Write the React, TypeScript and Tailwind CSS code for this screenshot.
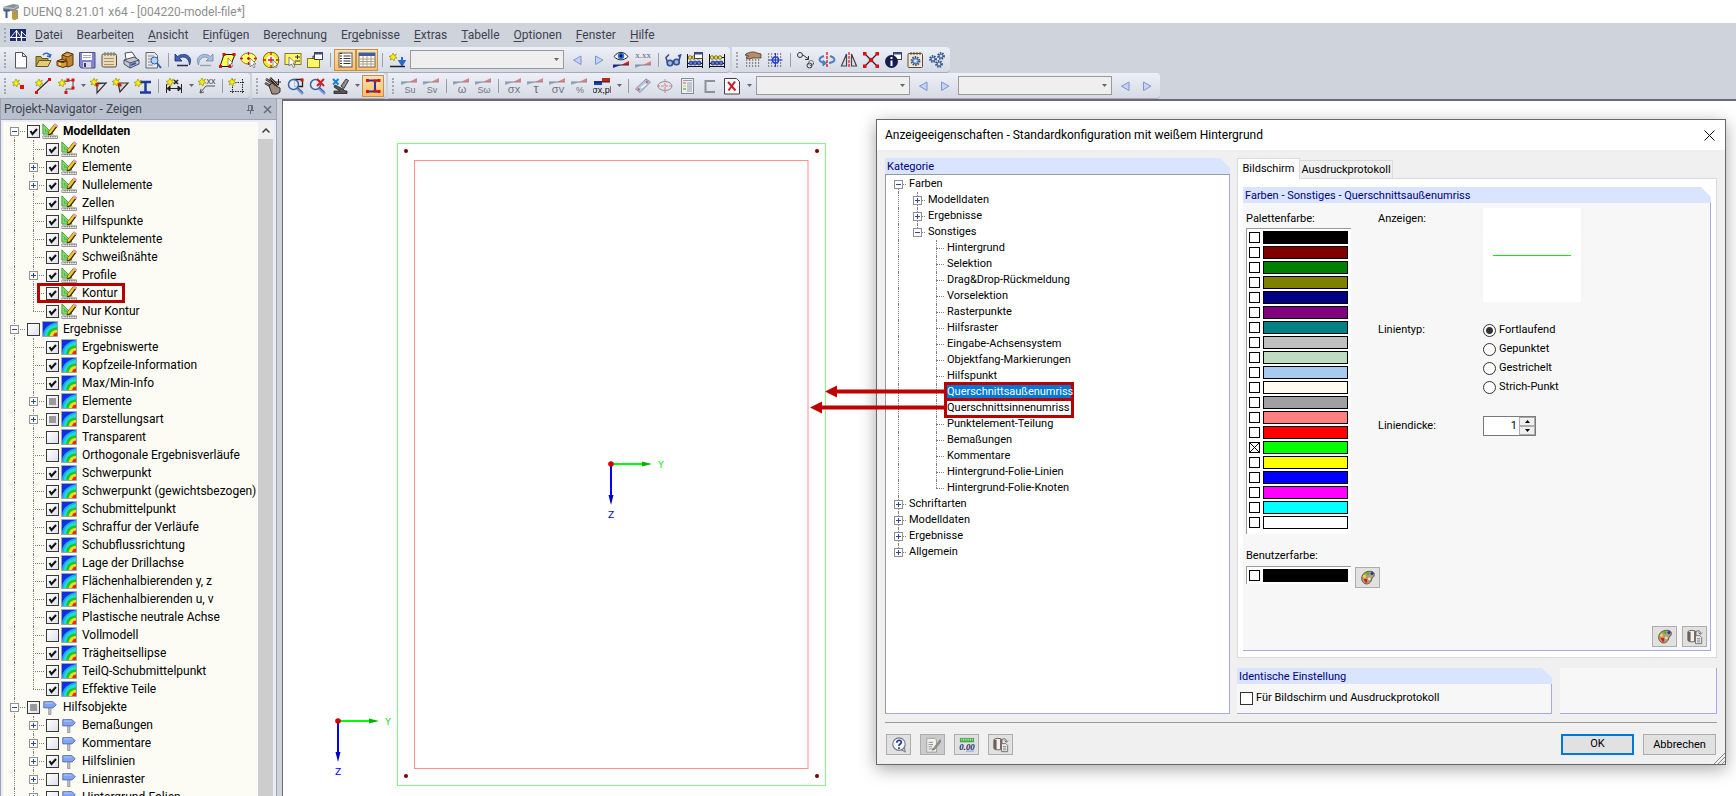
import type { ReactNode } from "react";

type Check = "on" | "off" | "mixed";
type NavItem = { label: string; check: Check; expand?: boolean; marked?: boolean };
type NavGroup = { label: string; check: Check; icon: "model" | "result" | "sign"; bold?: boolean; items: NavItem[] };

const menus = [
  ["", "D", "atei"],
  ["Bearbeite", "n", ""],
  ["", "A", "nsicht"],
  ["E", "i", "nfügen"],
  ["Be", "r", "echnung"],
  ["Er", "g", "ebnisse"],
  ["", "E", "xtras"],
  ["", "T", "abelle"],
  ["", "O", "ptionen"],
  ["", "F", "enster"],
  ["", "H", "ilfe"],
];

const navigator: NavGroup[] = [
  {
    label: "Modelldaten",
    check: "on",
    icon: "model",
    bold: true,
    items: [
      { label: "Knoten", check: "on" },
      { label: "Elemente", check: "on", expand: true },
      { label: "Nullelemente", check: "on", expand: true },
      { label: "Zellen", check: "on" },
      { label: "Hilfspunkte", check: "on" },
      { label: "Punktelemente", check: "on" },
      { label: "Schweißnähte", check: "on" },
      { label: "Profile", check: "on", expand: true },
      { label: "Kontur", check: "on", marked: true },
      { label: "Nur Kontur", check: "on" },
    ],
  },
  {
    label: "Ergebnisse",
    check: "off",
    icon: "result",
    items: [
      { label: "Ergebniswerte", check: "on" },
      { label: "Kopfzeile-Information", check: "on" },
      { label: "Max/Min-Info", check: "on" },
      { label: "Elemente", check: "mixed", expand: true },
      { label: "Darstellungsart", check: "mixed", expand: true },
      { label: "Transparent", check: "off" },
      { label: "Orthogonale Ergebnisverläufe", check: "off" },
      { label: "Schwerpunkt", check: "on" },
      { label: "Schwerpunkt (gewichtsbezogen)", check: "on" },
      { label: "Schubmittelpunkt", check: "on" },
      { label: "Schraffur der Verläufe", check: "on" },
      { label: "Schubflussrichtung", check: "on" },
      { label: "Lage der Drillachse", check: "on" },
      { label: "Flächenhalbierenden y, z", check: "on" },
      { label: "Flächenhalbierenden u, v", check: "on" },
      { label: "Plastische neutrale Achse", check: "on" },
      { label: "Vollmodell", check: "off" },
      { label: "Trägheitsellipse", check: "on" },
      { label: "TeilQ-Schubmittelpunkt", check: "on" },
      { label: "Effektive Teile", check: "on" },
    ],
  },
  {
    label: "Hilfsobjekte",
    check: "mixed",
    icon: "sign",
    items: [
      { label: "Bemaßungen", check: "off", expand: true },
      { label: "Kommentare", check: "off", expand: true },
      { label: "Hilfslinien", check: "on", expand: true },
      { label: "Linienraster", check: "off", expand: true },
      { label: "Hintergrund-Folien", check: "off", expand: true },
    ],
  },
];

const categories = [
  "Hintergrund",
  "Selektion",
  "Drag&Drop-Rückmeldung",
  "Vorselektion",
  "Rasterpunkte",
  "Hilfsraster",
  "Eingabe-Achsensystem",
  "Objektfang-Markierungen",
  "Hilfspunkt",
  "Querschnittsaußenumriss",
  "Querschnittsinnenumriss",
  "Punktelement-Teilung",
  "Bemaßungen",
  "Kommentare",
  "Hintergrund-Folie-Linien",
  "Hintergrund-Folie-Knoten",
];

const palette = [
  { name: "Schwarz", bg: "bg-[#000000]" },
  { name: "Dunkelrot", bg: "bg-[#800000]" },
  { name: "Grün", bg: "bg-[#008000]" },
  { name: "Oliv", bg: "bg-[#808000]" },
  { name: "Dunkelblau", bg: "bg-[#000080]" },
  { name: "Violett", bg: "bg-[#800080]" },
  { name: "Blaugrün", bg: "bg-[#008080]" },
  { name: "Silber", bg: "bg-[#c0c0c0]" },
  { name: "Hellgrün", bg: "bg-[#c0dcc0]" },
  { name: "Himmelblau", bg: "bg-[#a6caf0]" },
  { name: "Creme", bg: "bg-[#fffbf0]" },
  { name: "Grau", bg: "bg-[#a0a0a4]" },
  { name: "Hellrot", bg: "bg-[#ff8080]" },
  { name: "Rot", bg: "bg-[#ff0000]" },
  { name: "Limone", bg: "bg-[#00ff00]" },
  { name: "Gelb", bg: "bg-[#ffff00]" },
  { name: "Blau", bg: "bg-[#0000ff]" },
  { name: "Magenta", bg: "bg-[#ff00ff]" },
  { name: "Cyan", bg: "bg-[#00ffff]" },
  { name: "Weiß", bg: "bg-[#ffffff]" },
];

/* ---------- icons, all on an 18 x 18 grid ---------- */

function Star({ x = 5, y = 5 }: { x?: number; y?: number }) {
  return (
    <g transform={`translate(${x} ${y})`}>
      <path d="M0-4 1-1.5 3.5-3 2-.5 4 1 1.5 1.2 1 4-.7 1.8-3 3-1.8.6-4-.6-1.4-1.2z" fill="#fff200" stroke="#8c8600" strokeWidth=".6" />
    </g>
  );
}

function Node({ x, y }: { x: number; y: number }) {
  return <rect x={x - 1.5} y={y - 1.5} width="3" height="3" fill="#e01010" />;
}

function Wedge({ faded = true }: { faded?: boolean }) {
  return (
    <g opacity={faded ? 0.5 : 1}>
      <path d="M1 6h8L1 9z" fill={faded ? "#4a68b8" : "#1226e0"} />
      <path d="M9 6l8-4v4z" fill="#e01818" />
      <path d="M1 6h16" stroke="#333" />
    </g>
  );
}

function WedgeText({ text, size = 9 }: { text: string; size?: number }) {
  return (
    <g>
      <g transform="translate(0 -1)">
        <Wedge />
      </g>
      <text x="10" y="16" textAnchor="middle" fontSize={size} fontFamily="Liberation Sans, sans-serif" fill="#70747f">
        {text}
      </text>
    </g>
  );
}

function Abacus() {
  return (
    <g>
      <path d="M1.5 3v14M16.5 3v14M1 6.500h16M1 12.500h16M1 15.500h16" stroke="#111" fill="none" />
      {[4, 8, 12].map((x) => (
        <circle key={x} cx={x} cy="6.500" r="1.800" fill="#f0dc50" stroke="#5a5000" strokeWidth=".7" />
      ))}
      {[5, 9, 13].map((x) => (
        <circle key={x} cx={x} cy="12" r="2" fill="#5878d8" stroke="#14246a" strokeWidth=".8" />
      ))}
    </g>
  );
}

function Magnifier() {
  return (
    <g>
      <path d="M11 11l5 5" stroke="#7c98d4" strokeWidth="3" strokeLinecap="round" />
      <path d="M12 11l4.500 4" stroke="#2c50a8" strokeWidth="1" strokeLinecap="round" />
      <circle cx="7.500" cy="7.500" r="5" fill="#e4f0ff" fillOpacity=".8" stroke="#3c5ca4" strokeWidth="1.500" />
    </g>
  );
}

function Lattice() {
  return <path d="M2 3h15M2 6h15M2 9h15M2 12h15M2 15h15" stroke="#333" strokeWidth="1.200" strokeDasharray="1.200 1.800" />;
}

function Cog({ x, y, r }: { x: number; y: number; r: number }) {
  return (
    <g transform={`translate(${x} ${y})`}>
      <circle r={r} fill="none" stroke="#34508c" strokeWidth="1.800" strokeDasharray="1.500 1" />
      <circle r={r - 1} fill="#84a8e4" stroke="#34508c" strokeWidth=".8" />
      <circle r={r / 3} fill="#e8edf6" />
    </g>
  );
}

const icons: Record<string, ReactNode> = {
  file: <path d="M3.500 1.500h7l4 4v11.500h-11zM10.500 1.500v4h4" fill="#fff" stroke="#555" />,
  open: (
    <g stroke="#6a5618">
      <path d="M2 15.500V5.500h5l1 2h6v3" fill="#b89c48" />
      <path d="M2 15.500l3-6h12l-3 6z" fill="#e0cc78" />
      <path d="M9 4c2-3 6-2 7 1m1-2l-1 3-3-1" fill="none" stroke="#2c6db8" strokeWidth="1.500" />
    </g>
  ),
  archive: (
    <g stroke="#5a3408">
      <path d="M6 4l5-3 6 2v11l-5 2-6-2z" fill="#c08430" />
      <path d="M6 4l6 2 5-3" fill="#e4b868" />
      <path d="M1 10l5-2 5 2v5l-4 1.500-6-2z" fill="#d89b3c" />
      <path d="M1 10l6 1.500 4-1.500M9 8h2" fill="#3c2408" />
      <path d="M3 13h2" stroke="#fff0b0" strokeWidth="1.500" />
    </g>
  ),
  save: (
    <g>
      <path d="M1.500 1.500h15.500v15.500h-14l-1.500-2z" fill="#8484cc" stroke="#50508c" />
      <path d="M4 2h10v7H4z" fill="#fff" />
      <path d="M5 4.500h8M5 6.500h8" stroke="#a8a8c8" />
      <path d="M5 11h8v5.500H5z" fill="#dadae8" />
      <path d="M6 12h2v4H6z" fill="#34346a" />
    </g>
  ),
  clip: (
    <g>
      <rect x="2" y="3" width="14.500" height="13" rx="1.500" fill="#ecdcb8" stroke="#5c4c34" />
      <path d="M5 1v4M8 1v4M11 1v4M14 1v4" stroke="#777" />
      <path d="M4 7.500h10M4 10.500h10M4 13.500h10" stroke="#a4947c" />
    </g>
  ),
  print: (
    <g stroke="#4c4c58">
      <path d="M4 8L3 2l7-1 4 6" fill="#fff" />
      <path d="M2 9l10-3 5 3v4l-9 4-6-4z" fill="#c4c8d4" />
      <path d="M2 9l6 3 9-3M8 12v5" fill="none" />
      <path d="M9 14l5-2" stroke="#2c58c8" strokeWidth="2" />
    </g>
  ),
  preview: (
    <g>
      <path d="M2 1.500h8.500l3 3v12.500H2z" fill="#e8eaf0" stroke="#666" />
      <path d="M4 5h6M4 8h4M4 11h3M4 14h5" stroke="#888" />
      <circle cx="10.500" cy="9.500" r="3.500" fill="#b4d4f8" stroke="#34609c" />
      <path d="M13 12l4 5" stroke="#34609c" strokeWidth="2" />
    </g>
  ),
  undo: (
    <g>
      <path d="M1 3v7h7L5.500 7.500C9 4.500 15 6 15.500 14 20 4 9 1 3.500 5.500z" fill="#3c64b8" stroke="#142c68" strokeWidth=".8" />
      <path d="M3 14.500h11" stroke="#20305c" strokeWidth="1.500" />
    </g>
  ),
  redo: (
    <g>
      <path d="M17 3v7h-7l2.500-2.500C9 4.500 3 6 2.500 14-2 4 9 1 14.500 5.500z" fill="#a8c0dc" stroke="#7088a8" strokeWidth=".8" />
      <path d="M4 14.500h11" stroke="#98a4b8" strokeWidth="1.500" />
    </g>
  ),
  areaPoly: (
    <g>
      <path d="M6 3.500h11l-5 12H2z" fill="#ffff50" stroke="#111" />
      <Node x={6} y={3.5} />
      <Node x={16} y={3.5} />
      <Node x={2.5} y={15.5} />
      <Node x={12} y={15.5} />
      <path d="M10 7v8l2-2 2 3 1-1-2-3h2z" fill="#fff" stroke="#555" strokeWidth=".6" />
    </g>
  ),
  areaEllipse: (
    <g>
      <ellipse cx="8.500" cy="7.500" rx="7.500" ry="5.500" fill="#ffff70" stroke="#8c7a00" />
      <path d="M8.500 1v3M8.500 11v3M0 7.500h3M14 7.500h3M7 7.500h3M8.500 6v3" stroke="#e01010" strokeWidth="1.300" />
      <path d="M10 7v9l2-2 2 3 1-1-2-3h3z" fill="#fff" stroke="#555" strokeWidth=".6" />
    </g>
  ),
  areaRing: (
    <g>
      <circle cx="9" cy="9" r="6" fill="none" stroke="#6a5c00" strokeWidth="4.500" />
      <circle cx="9" cy="9" r="6" fill="#fff" stroke="#f8ec20" strokeWidth="3" />
      <path d="M9 1v3M9 6v6M6 9h6M1 9h3M14 9h3M9 14v3" stroke="#e01010" strokeWidth="1.300" />
      <path d="M11 9v8l2-2 1 2 1-1-1-2h2z" fill="#fff" stroke="#555" strokeWidth=".6" />
    </g>
  ),
  note: (
    <g>
      <rect x="1" y="2.500" width="16" height="11" fill="#fff76a" stroke="#8a7c1c" />
      <path d="M5 6v9l2.500-2 2 3.500 1.500-1-2-3.500h3z" fill="#fff" stroke="#555" strokeWidth=".7" />
      <path d="M11 6h5M13.500 4v4M11 10h5" stroke="#333" />
    </g>
  ),
  noteWindow: (
    <g>
      <rect x="1.500" y="7.500" width="12" height="9" fill="#fff76a" stroke="#8a7c1c" />
      <path d="M7 8V5h3" fill="none" stroke="#333" />
      <rect x="8.500" y="1.500" width="8" height="7" fill="#fff" stroke="#444" />
      <path d="M8.500 2.500h8" stroke="#3c4c8c" strokeWidth="2" />
    </g>
  ),
  panelList: (
    <g>
      <rect x="3" y="2" width="13" height="14" fill="#fff" stroke="#555" />
      <path d="M5 2v14" stroke="#333" strokeDasharray="1 1.500" strokeWidth="2" />
      <path d="M7.500 5h7M7.500 7.500h7M7.500 10h7M7.500 12.500h7" stroke="#333" />
    </g>
  ),
  panelTable: (
    <g>
      <rect x="1" y="2" width="16" height="14" fill="#fff" stroke="#666" />
      <path d="M1 3.500h16" stroke="#3c5caa" strokeWidth="3" />
      <path d="M1 8h16M1 10.500h16M1 13h16M5 5v11M9 5v11M13 5v11" stroke="#b09c80" />
    </g>
  ),
  newLoad: (
    <g>
      <Star x={5} y={6} />
      <path d="M14 6v6M11.500 10l2.500 4 2.500-4z" fill="#2c68c8" stroke="#2c68c8" strokeWidth="2" />
      <path d="M2 15.500h15" stroke="#222" strokeWidth="1.500" />
    </g>
  ),
  left: <path d="M13 5v8.500L5.500 9.200z" fill="#c0d4fa" stroke="#8294c8" />,
  right: <path d="M5.500 5v8.500L13 9.200z" fill="#c0d4fa" stroke="#8294c8" />,
  eye: (
    <g>
      <g transform="translate(0 8)">
        <Wedge faded={false} />
      </g>
      <path d="M2 5.500c4-5.500 10-5.500 14 0-4 4.500-10 4.500-14 0z" fill="#fff" stroke="#222" />
      <circle cx="9" cy="5" r="3.200" fill="#2c6ce0" />
      <circle cx="9" cy="5" r="1.400" fill="#081030" />
    </g>
  ),
  values: (
    <g>
      <g transform="translate(0 8)">
        <Wedge />
      </g>
      <text x="9" y="7" textAnchor="middle" fontSize="9" fontFamily="Liberation Serif, serif" fill="#60646f">
        x.xx
      </text>
    </g>
  ),
  glasses: (
    <g fill="none" stroke="#34508c" strokeWidth="1.600">
      <circle cx="6" cy="12" r="2.800" fill="#9cb8e8" />
      <circle cx="12.500" cy="11" r="2.800" fill="#9cb8e8" />
      <path d="M3.500 11.500L2 6.500l3-3M15 9.500l1.500-5.500-2.500 1M8.500 11l1.500-.5" />
    </g>
  ),
  abacusWindow: (
    <g>
      <Abacus />
      <rect x="8.500" y="1.500" width="8" height="6" fill="#fff" stroke="#444" />
      <path d="M8.500 2.500h8" stroke="#3c4c8c" strokeWidth="2" />
    </g>
  ),
  abacus: <Abacus />,
  gridHand: (
    <g>
      <Lattice />
      <path d="M1 4c3-3 9-4 12-2l4 1v4H9l-4 1-3-1 3-2z" fill="#b48c6c" stroke="#503824" strokeWidth=".8" />
    </g>
  ),
  gridSnap: (
    <g>
      <Lattice />
      <path d="M9.500 2v14M2.500 9h14" stroke="#2440d8" />
      <circle cx="9.500" cy="9" r="3" fill="none" stroke="#2440d8" strokeWidth="1.500" />
    </g>
  ),
  move: (
    <g fill="none" stroke="#333">
      <circle cx="4" cy="4" r="2.500" />
      <circle cx="13.500" cy="14.500" r="2.500" />
      <circle cx="15" cy="12" r="2.500" strokeDasharray="2 1" />
      <path d="M7 4l5.500 4M12.500 8.500H9M12.500 8.500V5" />
    </g>
  ),
  rotate: (
    <g fill="none">
      <path d="M6 5C0 7 0 11 7 12M12 5c6 2 6 6-1 7" stroke="#4880c0" strokeWidth="2" />
      <path d="M5 9.500l3.500 2.500L5 15z" fill="#4880c0" stroke="#4880c0" />
      <path d="M9 1v16" stroke="#e01010" strokeDasharray="3 1" strokeWidth="1.300" />
    </g>
  ),
  mirror: (
    <g fill="none">
      <path d="M6.500 3v12H1.500zM11.500 3v12h5z" stroke="#444" strokeWidth="1.200" />
      <path d="M9 1v16" stroke="#e01010" strokeDasharray="3 1" strokeWidth="1.200" />
    </g>
  ),
  divide: (
    <g>
      <path d="M2 2l14 14M16 2L2 16" stroke="#222" strokeWidth="1.300" />
      <rect x="1" y="1" width="3.500" height="3.500" fill="#e01010" />
      <rect x="13.500" y="1" width="3.500" height="3.500" fill="#e01010" />
      <rect x="1" y="13.500" width="3.500" height="3.500" fill="#e01010" />
      <rect x="13.500" y="13.500" width="3.500" height="3.500" fill="#e01010" />
      <circle cx="9" cy="9" r="2.300" fill="#e01010" />
    </g>
  ),
  info: (
    <g>
      <rect x="9.500" y="1.500" width="8" height="7" fill="#fff" stroke="#444" />
      <path d="M9.500 2.500h8" stroke="#3c4c8c" strokeWidth="2" />
      <circle cx="7.500" cy="10.500" r="6.500" fill="#141c50" />
      <path d="M7.500 6v2M7.500 9.500V15" stroke="#fff" strokeWidth="2" />
    </g>
  ),
  settings: (
    <g>
      <rect x="2" y="2.500" width="14.500" height="14" rx="1" fill="#f4e8d0" stroke="#5c4c34" />
      <path d="M5 1v3M8 1v3M11 1v3M14 1v3" stroke="#555" />
      <Cog x={9.5} y={10} r={4} />
    </g>
  ),
  gears: (
    <g>
      <Cog x={5} y={8} r={3} />
      <Cog x={13} y={5} r={3} />
      <Cog x={11} y={13} r={3} />
    </g>
  ),
  newNode: (
    <g>
      <Star x={4} y={6} />
      <rect x="8" y="8" width="4" height="4" fill="#e01010" />
    </g>
  ),
  newLine: (
    <g>
      <path d="M2 15L16 2" stroke="#333" strokeWidth="1.300" />
      <Star x={5} y={6} />
      <Node x={2.5} y={15.5} />
      <Node x={15.5} y={2.5} />
    </g>
  ),
  newPoly: (
    <g>
      <path d="M7 5l9-2v9H9v4" fill="none" stroke="#555" />
      <Star x={5} y={6} />
      <Node x={16} y={3} />
      <Node x={16} y={11} />
      <Node x={9} y={15.5} />
      <Node x={11} y={3} />
    </g>
  ),
  newAngle: (
    <g>
      <path d="M4 6h13M7 16V7l9-1z" fill="none" stroke="#333" strokeWidth="1.200" />
      <Star x={4} y={5} />
      <Node x={7} y={8} />
    </g>
  ),
  newTriangle: (
    <g>
      <path d="M6 6h10L8 15z" fill="#d4d6dc" stroke="#333" strokeWidth="1.200" />
      <Star x={4} y={5} />
      <Node x={8} y={8} />
    </g>
  ),
  newProfile: (
    <g>
      <path d="M6 5h11M6 15.500h11M11.500 5v10" stroke="#1c3c9c" strokeWidth="2.500" />
      <Star x={4} y={6} />
    </g>
  ),
  dimension: (
    <g stroke="#222">
      <path d="M1.500 7v9M16.500 7v9M2 11.500h14" />
      <path d="M5 9l-3 2.500L5 14zM13 9l3 2.500-3 2.500z" fill="#222" />
      <path d="M9 3l4 4M13 3L9 7" strokeWidth="1.500" />
      <Star x={5} y={5} />
    </g>
  ),
  comment: (
    <g>
      <path d="M2 16l6-7h9M2 16l1-4M2 16l4-1" fill="none" stroke="#555" />
      <Star x={4} y={5} />
      <text x="13" y="7" textAnchor="middle" fontSize="9" fontFamily="Liberation Sans, sans-serif" fill="#444">
        xx
      </text>
    </g>
  ),
  frame: (
    <g>
      <path d="M4.500 2v15M14.500 2v15M2 5.500h15M2 14.500h15" stroke="#222" strokeDasharray="1.500 1" />
      <Star x={4} y={5} />
    </g>
  ),
  grab: (
    <g>
      <path d="M2 2l10 7M1 6l9 5M6 1l8 8" stroke="#2c2420" strokeWidth="2.500" />
      <path d="M2 2l10 7M1 6l9 5M6 1l8 8" stroke="#a08c7c" />
      <path d="M5 9l3-3 4 3 4 2v4l-3 2H8z" fill="#a08c7c" stroke="#3c2c20" />
      <path d="M11 5h6M14.500 2v6" stroke="#222" />
    </g>
  ),
  zoomWindow: (
    <g>
      <path d="M8.500 2.500h8v7h-8z" fill="none" stroke="#222" strokeWidth="1.300" />
      <Node x={16} y={3} />
      <Magnifier />
    </g>
  ),
  zoomReset: (
    <g>
      <Magnifier />
      <path d="M9 2l7 7M16 2L9 9" stroke="#e01818" strokeWidth="2" />
    </g>
  ),
  view: (
    <g>
      <path d="M10 9l5-7 2.500 1.500-4.500 8z" fill="#8c8c8c" stroke="#222" strokeWidth=".8" />
      <path d="M4 8l8 4 2 2h2v2.500H3V14h6l-6-4z" fill="#555" stroke="#222" strokeWidth=".8" />
      <path d="M2 2l5.500 5.500M7.500 2L2 7.500" stroke="#1880d8" strokeWidth="2" />
    </g>
  ),
  profile: (
    <g>
      <path d="M4 3.500h11M4 14.500h11M11 4v10" stroke="#1c3c9c" strokeWidth="2" />
      <Node x={3.5} y={3.5} />
      <Node x={15} y={3.5} />
      <Node x={3.5} y={14.5} />
      <Node x={15} y={14.5} />
      <Node x={11} y={4} />
      <Node x={11} y={14} />
    </g>
  ),
  su: <WedgeText text="Su" />,
  sv: <WedgeText text="Sv" />,
  omega: <WedgeText text="ω" size={11} />,
  somega: <WedgeText text="Sω" />,
  sigmaX: <WedgeText text="σx" size={11} />,
  tau: <WedgeText text="τ" size={13} />,
  sigmaV: <WedgeText text="σv" size={11} />,
  percent: <WedgeText text="%" />,
  sigmaPl: (
    <g>
      <path d="M9 1h8v4H9z" fill="#c02818" />
      <path d="M1 4h8v4H1z" fill="#1c3cb0" />
      <path d="M1 5h16" stroke="#222" />
      <text x="9" y="16" textAnchor="middle" fontSize="9" fontFamily="Liberation Sans, sans-serif" fill="#111">
        σx,pl
      </text>
    </g>
  ),
  plate: (
    <g>
      <path d="M1.500 12L12 2l4.500 3L6 15.500z" fill="#b4cce4" stroke="#7c94b4" />
      <path d="M4 13l10-9" stroke="#e06060" strokeDasharray="2 9" strokeWidth="2.500" />
      <path d="M7 11l5-4" stroke="#fff" strokeWidth="1.500" />
    </g>
  ),
  ellipse: (
    <g fill="none">
      <ellipse cx="9" cy="9" rx="7" ry="4.500" stroke="#8c909c" />
      <path d="M9 2v14M1 9h16" stroke="#e08080" strokeDasharray="3 1" />
    </g>
  ),
  report: (
    <g>
      <rect x="3.500" y="1.500" width="12" height="15" fill="#eceef2" stroke="#888c98" />
      <path d="M5 6h3" stroke="#e0a0a0" strokeWidth="2" />
      <path d="M5 9h3" stroke="#e0e080" strokeWidth="2" />
      <path d="M5 12h3" stroke="#80d080" strokeWidth="2" />
      <path d="M9 6h5M9 8h5M9 10h5M9 12h5M9 14h5M5 3.500h9" stroke="#9ca0ac" />
    </g>
  ),
  channel: <path d="M14 5V4H5.500v11H14v-1" fill="none" stroke="#8c909c" strokeWidth="2" />,
  stop: (
    <g>
      <path d="M1.500 1.500h12l3 3V17h-15z" fill="#f8f8fa" stroke="#444" />
      <path d="M5 5l7.500 8.500M12 4.500L5.500 13.500" stroke="#c82020" strokeWidth="2" />
    </g>
  ),
  model: (
    <g>
      <path d="M1 1v11.500h11.500z" fill="#7cdc68" stroke="#3c9c3c" />
      <path d="M4 7v2.500h2.500z" fill="#fcfcf4" stroke="#2c8c2c" strokeWidth=".7" />
      <path d="M14.500 1l3 2-7 9-3.500 1.500.5-4z" fill="#f0c828" stroke="#6c4c10" strokeWidth=".8" />
      <path d="M16.500 4l-6 8-3.500 1.500" fill="none" stroke="#3c2808" strokeWidth="1.300" />
      <path d="M14 1.500l3.500 2.500" stroke="#e8a0b8" strokeWidth="2" />
      <path d="M1 14.500h16.500v3H1z" fill="#fff" stroke="#888" />
      <path d="M3 15.500h14" stroke="#666" strokeDasharray="1 1" strokeWidth="1.500" />
    </g>
  ),
  result: (
    <g>
      <rect x="1" y="1" width="16" height="16" fill="#1030e0" />
      <path d="M1 17C1 8 8 3 17 1v16z" fill="#20a8f0" />
      <path d="M3 17C4 9 9 5 17 3.500v13.500z" fill="#20dcd0" />
      <path d="M6 17c0-6 4-9 11-10v10z" fill="#28c028" />
      <path d="M8.500 17c1-4 3-7 8.500-7v7z" fill="#e8e020" />
      <path d="M12.500 17c0-2 2-4 4.500-4v4z" fill="#e82818" />
      <path d="M.5.500h17v17H.5z" fill="none" stroke="#9098a0" />
    </g>
  ),
  sign: (
    <g>
      <path d="M7.500 3v14.500H10V3z" fill="#c8c8c8" stroke="#808080" strokeWidth=".8" />
      <path d="M2 3h10.500L16 6.500 12.500 10H2z" fill="#80a4f4" stroke="#5868a4" />
      <path d="M3 4.500h9" stroke="#b8d0ff" />
    </g>
  ),
  palette: (
    <g>
      <path d="M2 11C1 5 6 1 12 1.500c5 0 5 5 2.500 7-2 1-1 2-2 4-3 5-9 4-10.500-1.500z" fill="#b49c74" stroke="#5c4c30" />
      <circle cx="10.500" cy="10" r="1.600" fill="#e0e0e0" />
      <circle cx="5" cy="7" r="1.700" fill="#f4e020" />
      <circle cx="9" cy="4" r="1.600" fill="#28c828" />
      <circle cx="13.500" cy="4" r="1.700" fill="#2030d0" />
      <path d="M4 10h4v4H6z" fill="#e01818" />
    </g>
  ),
  standard: (
    <g>
      <path d="M1 3c1-2 8-2 9 0v10c-1 2-8 2-9 0z" fill="#f4f0ec" stroke="#5c5048" />
      <path d="M1 3h3v11H2L1 13zM8 2l2 1v10l-2 1z" fill="#6c6058" />
      <path d="M10 3c3-2 5-1 5 2m-2-1l2 2 2-2" fill="none" stroke="#555" />
      <path d="M9.500 7.500h5l2 2v7h-7z" fill="#f8f8f8" stroke="#666" />
      <path d="M11 10.500h4M11 12.500h4M11 14.500h4" stroke="#777" />
    </g>
  ),
  help: (
    <g>
      <path d="M11 14l5 3-1-6" fill="#d0d4dc" stroke="#666c78" />
      <circle cx="9" cy="8" r="7" fill="#f4f6fa" stroke="#767c88" strokeWidth="1.300" />
      <path d="M6.500 6.500c0-4 6-3.500 5 0-.5 1.500-2.500 1.500-2.500 3.500M9 11.500v2" fill="none" stroke="#24408c" strokeWidth="2" />
    </g>
  ),
  edit: (
    <g>
      <path d="M2 1.500h9l2 2v13.500H2z" fill="#f0f0ec" stroke="#9c9c94" />
      <path d="M4 6h5M4 8.500h5M4 11h4M4 13.500h6" stroke="#888" />
      <path d="M17 3l-7 9-2 3 3-1 7-9z" fill="#989890" stroke="#6c6c64" strokeWidth=".7" />
    </g>
  ),
  decimals: (
    <g>
      <path d="M1 1h16v5H1z" fill="#48a850" />
      <path d="M3 2v2M5 2v2M7 2v2M9 2v2M11 2v2M13 2v2M15 2v2" stroke="#c8f0c8" />
      <path d="M8 15h9v2H8z" fill="#a8b8e8" />
      <text x="9" y="15" textAnchor="middle" fontSize="10" fontWeight="bold" fontStyle="italic" fontFamily="Liberation Serif, serif" fill="#1c2c5c">
        0.00
      </text>
    </g>
  ),
};

function Icon({ name, className = "size-[18px]" }: { name: string; className?: string }) {
  return (
    <svg viewBox="0 0 18 18" className={`shrink-0 ${className}`} aria-hidden="true">
      {icons[name]}
    </svg>
  );
}

/* ---------- toolbars ---------- */

function Tool({ name, active = false }: { name: string; active?: boolean }) {
  return (
    <button
      aria-label={name}
      className={`flex h-[22px] w-[22px] shrink-0 items-center justify-center ${
        active ? "border border-[#c2924c] bg-gradient-to-b from-[#fde0b0] to-[#fdbf68]" : ""
      }`}
    >
      <Icon name={name} />
    </button>
  );
}

function Caret() {
  return (
    <svg viewBox="0 0 5 3" className="h-[3px] w-[5px]" aria-hidden="true">
      <path d="M0 0h5L2.500 3z" fill="#666" />
    </svg>
  );
}

function SplitTool({ name }: { name: string }) {
  return (
    <div className="flex h-[22px] shrink-0">
      <button aria-label={name} className="flex w-6 items-center justify-center">
        <Icon name={name} />
      </button>
      <button aria-label={`${name} Auswahl`} className="flex w-2.5 items-center justify-center">
        <Caret />
      </button>
    </div>
  );
}

function Separator() {
  return (
    <div className="flex w-2 shrink-0 justify-center">
      <div className="h-3.5 w-px bg-[#9a9da8]" />
    </div>
  );
}

function Combo({ label }: { label: string }) {
  return (
    <div className="relative mx-0.5 flex w-[154px] shrink-0 items-center">
      <select aria-label={label} className="h-[19px] w-full appearance-none border border-[#9a9a9a] bg-[#efefef] outline-none" />
      <span className="pointer-events-none absolute right-[5px]">
        <Caret />
      </span>
    </div>
  );
}

function Toolbar({ children }: { children: ReactNode }) {
  return (
    <div className="mr-0.5 flex h-[26px] shrink-0 items-center rounded-r border-b border-[#a9acb8] bg-gradient-to-b from-[#edf0f7] to-[#d6dae4] pr-0.5">
      <div className="flex w-2.5 shrink-0 justify-center">
        <div className="h-4 border-l-2 border-dotted border-[#a4a8b4]" />
      </div>
      {children}
    </div>
  );
}

function Toolbars() {
  return (
    <div>
      <div className="flex">
        <Toolbar>
          {["file", "open", "archive", "save", "clip", "print", "preview"].map((n) => (
            <Tool key={n} name={n} />
          ))}
          <Separator />
          {["undo", "redo", "areaPoly", "areaEllipse", "areaRing", "note", "noteWindow"].map((n) => (
            <Tool key={n} name={n} />
          ))}
          <Separator />
          <Tool name="panelList" active />
          <Tool name="panelTable" active />
          <Separator />
          <Tool name="newLoad" />
          <Combo label="Lastfall" />
          {["left", "right", "eye", "values"].map((n) => (
            <Tool key={n} name={n} />
          ))}
          <Separator />
          {["glasses", "abacusWindow", "abacus"].map((n) => (
            <Tool key={n} name={n} />
          ))}
        </Toolbar>
        <Toolbar>
          <Tool name="gridHand" />
          <Tool name="gridSnap" />
          <Separator />
          {["move", "rotate", "mirror", "divide", "info", "settings", "gears"].map((n) => (
            <Tool key={n} name={n} />
          ))}
        </Toolbar>
      </div>
      <div className="flex">
        <Toolbar>
          <Tool name="newNode" />
          <Tool name="newLine" />
          <SplitTool name="newPoly" />
          <Tool name="newAngle" />
          <Tool name="newTriangle" />
          <Tool name="newProfile" />
          <Separator />
          <SplitTool name="dimension" />
          <Tool name="comment" />
          <Separator />
          <Tool name="frame" />
        </Toolbar>
        <Toolbar>
          <Tool name="grab" />
          <Tool name="zoomWindow" />
          <Tool name="zoomReset" />
          <SplitTool name="view" />
          <Tool name="profile" active />
        </Toolbar>
        <Toolbar>
          <Tool name="su" />
          <Tool name="sv" />
          <Separator />
          <Tool name="omega" />
          <Tool name="somega" />
          <Separator />
          {["sigmaX", "tau", "sigmaV", "percent"].map((n) => (
            <Tool key={n} name={n} />
          ))}
          <SplitTool name="sigmaPl" />
          <Separator />
          {["plate", "ellipse", "report", "channel"].map((n) => (
            <Tool key={n} name={n} />
          ))}
          <SplitTool name="stop" />
          <Combo label="Querschnittsteil" />
          <Tool name="left" />
          <Tool name="right" />
          <Combo label="Ergebnisstelle" />
          <Tool name="left" />
          <Tool name="right" />
        </Toolbar>
      </div>
    </div>
  );
}

/* ---------- tree parts ---------- */

type Line = "first" | "mid" | "last";

const lineSpan: Record<Line, string> = {
  first: "top-1/2 bottom-0",
  mid: "inset-y-0",
  last: "top-0 bottom-1/2",
};

function Guide() {
  return (
    <span className="relative h-full w-[19px] shrink-0">
      <span className="absolute inset-y-0 left-[9px] border-l border-dotted border-[#808080]" />
    </span>
  );
}

function Joint({ line, sign, wide = false }: { line: Line; sign?: "+" | "-"; wide?: boolean }) {
  return (
    <span className={`relative h-full shrink-0 ${wide ? "w-[22px]" : "w-[19px]"}`}>
      <span className={`absolute left-[9px] border-l border-dotted border-[#808080] ${lineSpan[line]}`} />
      <span className="absolute top-1/2 right-0.5 left-[9px] border-t border-dotted border-[#808080]" />
      {sign && (
        <button
          aria-label={sign === "+" ? "Aufklappen" : "Zuklappen"}
          className="absolute top-1/2 left-[5px] -mt-1 size-[9px] border border-[#919191] bg-[#fdfdfd]"
        >
          <span className="absolute top-[3px] left-px h-px w-[5px] bg-[#2c4a9c]" />
          {sign === "+" && <span className="absolute top-px left-[3px] h-[5px] w-px bg-[#2c4a9c]" />}
        </button>
      )}
    </span>
  );
}

function CheckBox({ state }: { state: Check }) {
  return (
    <span className="relative size-[13px] shrink-0">
      <input
        type="checkbox"
        defaultChecked={state === "on"}
        className="peer block size-[13px] appearance-none border border-[#3a3a3a] bg-gradient-to-br from-white to-[#dde1ea]"
      />
      <svg viewBox="0 0 13 13" className="pointer-events-none absolute inset-0 hidden peer-checked:block">
        <path d="M3.500 6l2 3 4.500-5" fill="none" stroke="#111" strokeWidth="2" />
      </svg>
      {state === "mixed" && <span className="pointer-events-none absolute inset-[3px] bg-[#9a9a9a]" />}
    </span>
  );
}

function Navigator() {
  return (
    <aside className="flex w-[277px] shrink-0 flex-col border-x border-[#9ea4b2] bg-[#e9edf5]">
      <div className="flex h-[21px] shrink-0 items-center border-b border-[#9ea4b2] bg-[#b9c0cd] pl-[3px] text-[#3f4450]">
        <span className="flex-1">Projekt-Navigator - Zeigen</span>
        <button aria-label="Anheften" className="px-1">
          <svg viewBox="0 0 9 9" className="size-[9px]" fill="none" stroke="#666b78">
            <path d="M2.500 5V.5h4V5M5.500 1v4M1 5.500h7M4.500 6v3" />
          </svg>
        </button>
        <button aria-label="Schließen" className="px-1">
          <svg viewBox="0 0 9 9" className="size-[9px]" stroke="#666b78" strokeWidth="1.500">
            <path d="M1 1l7 7M8 1L1 8" />
          </svg>
        </button>
      </div>
      <div className="flex min-h-0 flex-1 pt-0.5 pr-[3px] pl-0.5">
        <ul className="min-w-0 flex-1 overflow-hidden bg-[#fcfcf4] pl-0.5">
          {navigator.map((group, g) => (
            <li key={group.label}>
              <div className="flex h-[18px] items-center">
                <Joint line={g === 0 ? "first" : "mid"} sign="-" wide />
                <label className="flex items-center">
                  <CheckBox state={group.check} />
                  <Icon name={group.icon} className="mr-1 ml-0.5 size-4" />
                  <span className={`pl-px whitespace-nowrap ${group.bold ? "font-bold" : ""}`}>{group.label}</span>
                </label>
              </div>
              <ul>
                {group.items.map((item, i) => (
                  <li key={item.label} className="flex h-[18px] items-center">
                    <Guide />
                    <Joint line={i === group.items.length - 1 && g < 2 ? "last" : "mid"} sign={item.expand ? "+" : undefined} wide />
                    <label className="relative flex items-center">
                      <CheckBox state={item.check} />
                      <Icon name={group.icon} className="mr-1 ml-0.5 size-4" />
                      <span className="pl-px whitespace-nowrap">{item.label}</span>
                      {item.marked && <span className="absolute -inset-y-0.5 -right-2 -left-[9px] border-3 border-[#b80000]" />}
                    </label>
                  </li>
                ))}
              </ul>
            </li>
          ))}
        </ul>
        <div className="flex w-[15px] shrink-0 flex-col bg-[#cdcdcd]">
          <button aria-label="Nach oben" className="flex h-[17px] items-center justify-center bg-[#f0f0f0]">
            <svg viewBox="0 0 8 5" className="h-[5px] w-2" fill="none" stroke="#404040" strokeWidth="1.500">
              <path d="M.5 4.500L4 1l3.500 3.500" />
            </svg>
          </button>
        </div>
      </div>
    </aside>
  );
}

/* ---------- drawing area ---------- */

function Axes({ x, y }: { x: number; y: number }) {
  return (
    <g transform={`translate(${x} ${y})`} fontSize="9" fontFamily="DejaVu Sans, sans-serif" textAnchor="middle">
      <path d="M0 0h32" stroke="#00ff00" strokeWidth="2" />
      <path d="M31-2.500L41 0 31 2.500z" fill="#00b400" />
      <path d="M0 0v32" stroke="#0000ff" strokeWidth="2" />
      <path d="M-2.500 31L0 41l2.500-10z" fill="#0000c0" />
      <circle r="2.800" fill="#d00000" />
      <text x="50" y="4" fill="#00e800">
        Y
      </text>
      <text x="0" y="54" fill="#0000ff">
        Z
      </text>
    </g>
  );
}

function Drawing() {
  return (
    <svg className="absolute inset-0 size-full" aria-label="Querschnitt">
      <rect x="114.500" y="42.500" width="428" height="642" fill="none" stroke="#7dff7d" />
      <rect x="131.500" y="59.500" width="393.500" height="608" fill="none" stroke="#ff8f8f" />
      {[
        [123, 50],
        [534, 50],
        [123, 675],
        [534, 675],
      ].map(([x, y]) => (
        <circle key={`${x}-${y}`} cx={x} cy={y} r="2" fill="#7a0000" />
      ))}
      <Axes x={328} y={363} />
      <Axes x={55} y={620} />
    </svg>
  );
}

function Arrows() {
  return (
    <svg className="pointer-events-none absolute inset-0 size-full" aria-hidden="true">
      <path d="M550 290.500h112M536 306.500h126" stroke="#c00000" strokeWidth="4" />
      <path d="M542 290.500l12-6v12zM527 306.500l12-6v12z" fill="#c00000" />
    </svg>
  );
}

/* ---------- dialog ---------- */

function GroupHeader({ children }: { children: ReactNode }) {
  return (
    <div className="h-4 bg-[#d9e4fe] px-0.5 leading-[17px] text-[#000080] [clip-path:polygon(0_0,calc(100%_-_10px)_0,100%_10px,100%_100%,0_100%)]">
      {children}
    </div>
  );
}

function SmallButton({ name, label, dark = false }: { name: string; label: string; dark?: boolean }) {
  return (
    <button
      aria-label={label}
      className={`flex h-[21px] w-[25px] items-center justify-center border border-[#adadad] ${dark ? "bg-[#cccccc]" : "bg-[#e1e1e1]"}`}
    >
      <Icon name={name} className="size-4" />
    </button>
  );
}

function CategoryTree() {
  return (
    <section className="flex w-[345px] shrink-0 flex-col">
      <GroupHeader>Kategorie</GroupHeader>
      <ul className="flex-1 border border-t-[#9a9a9a] border-r-[#a8a8e8] border-b-[#a8a8e8] border-l-[#9a9a9a] bg-white pt-px pl-[3px]">
        <li>
          <div className="flex h-4 items-center">
            <Joint line="first" sign="-" />
            <span className="pl-px">Farben</span>
          </div>
          <ul>
            {["Modelldaten", "Ergebnisse", "Sonstiges"].map((label, i) => (
              <li key={label} className="flex h-4 items-center">
                <Guide />
                <Joint line={i === 2 ? "last" : "mid"} sign={i === 2 ? "-" : "+"} />
                <span className="pl-px">{label}</span>
              </li>
            ))}
            {categories.map((label, i) => (
              <li key={label} className="flex h-4 items-center">
                <Guide />
                <span className="w-[19px] shrink-0" />
                <Joint line={i === categories.length - 1 ? "last" : "mid"} />
                {i === 9 || i === 10 ? (
                  <span className={`relative h-4 px-px leading-4 ${i === 9 ? "w-[126px] bg-[#0078d7] text-white" : "w-[126px] bg-white"}`}>
                    <span className="relative z-10">{label}</span>
                    <span className="absolute -inset-x-0.5 -top-0.5 -bottom-0.5 border-3 border-[#b80000]" />
                  </span>
                ) : (
                  <span className="pl-px">{label}</span>
                )}
              </li>
            ))}
          </ul>
        </li>
        {["Schriftarten", "Modelldaten", "Ergebnisse", "Allgemein"].map((label, i) => (
          <li key={label} className="flex h-4 items-center">
            <Joint line={i === 3 ? "last" : "mid"} sign="+" />
            <span className="pl-px">{label}</span>
          </li>
        ))}
      </ul>
    </section>
  );
}

function Swatch({ name, bg, checked = false }: { name: string; bg: string; checked?: boolean }) {
  return (
    <label className="flex h-[15px] items-center gap-[3px]">
      <span className="relative size-[11px]">
        <input type="checkbox" aria-label={name} defaultChecked={checked} className="peer block size-[11px] appearance-none border border-black bg-white" />
        <svg viewBox="0 0 11 11" className="pointer-events-none absolute inset-0 hidden peer-checked:block">
          <path d="M1 1l9 9M10 1L1 10" stroke="#000" />
        </svg>
      </span>
      <span className={`h-[13px] flex-1 border border-black ${bg}`} />
    </label>
  );
}

function PropertyPanel() {
  return (
    <div className="flex flex-1 flex-col border border-[#dadada] bg-white px-[5px] pt-2 pb-1.5">
      <GroupHeader>Farben - Sonstiges - Querschnittsaußenumriss</GroupHeader>
      <div className="flex flex-1 flex-col border-r border-b border-[#a8a8e8] bg-[#f7f7f7] pl-[3px]">
        <div className="flex flex-1">
          <div className="w-[132px] pt-2">
            <p className="leading-4">Palettenfarbe:</p>
            <div className="mt-px w-[105px] border-t border-l border-[#9a9a9a] bg-white pt-px pr-[3px] pb-1 pl-0.5">
              {palette.map((c) => (
                <Swatch key={c.name} name={c.name} bg={c.bg} checked={c.name === "Limone"} />
              ))}
            </div>
            <p className="mt-[14px] leading-4">Benutzerfarbe:</p>
            <div className="mt-0.5 flex gap-1">
              <div className="w-[105px] shrink-0 self-start border-t border-l border-[#9a9a9a] bg-white pt-px pr-[3px] pb-px pl-0.5">
                <Swatch name="Benutzerfarbe" bg="bg-black" />
              </div>
              <div className="pt-px">
                <SmallButton name="palette" label="Farbe wählen" />
              </div>
            </div>
          </div>
          <div className="grid flex-1 grid-cols-[105px_1fr] content-start pt-[5px]">
            <p className="pt-[3px] leading-4">Anzeigen:</p>
            <div className="flex h-[94px] w-[98px] items-center bg-white px-2.5">
              <div className="h-px w-full bg-[#00f000]" />
            </div>
            <p className="mt-[20px] leading-4">Linientyp:</p>
            <div className="mt-[20px] flex flex-col gap-[3px]">
              {["Fortlaufend", "Gepunktet", "Gestrichelt", "Strich-Punkt"].map((label, i) => (
                <label key={label} className="flex h-4 items-center gap-[3px]">
                  <input
                    type="radio"
                    name="linientyp"
                    defaultChecked={i === 0}
                    className="size-[13px] appearance-none rounded-full border border-[#333] bg-white checked:bg-[radial-gradient(circle,#333_3px,#fff_4px)]"
                  />
                  {label}
                </label>
              ))}
            </div>
            <label htmlFor="liniendicke" className="mt-[21px] leading-5">
              Liniendicke:
            </label>
            <div className="mt-[21px] flex h-5 w-[53px] border border-[#7a7a7a] bg-white">
              <input id="liniendicke" type="text" defaultValue="1" className="min-w-0 flex-1 pr-0.5 text-right outline-none" />
              <div className="flex w-4 flex-col">
                <button aria-label="Erhöhen" className="flex flex-1 items-center justify-center border border-[#adadad] bg-[#f0f0f0]">
                  <svg viewBox="0 0 5 3" className="h-[3px] w-[5px]">
                    <path d="M0 3h5L2.500 0z" />
                  </svg>
                </button>
                <button aria-label="Verringern" className="flex flex-1 items-center justify-center border border-[#adadad] bg-[#f0f0f0]">
                  <svg viewBox="0 0 5 3" className="h-[3px] w-[5px]">
                    <path d="M0 0h5L2.500 3z" />
                  </svg>
                </button>
              </div>
            </div>
          </div>
        </div>
        <div className="flex justify-end gap-[5px] pr-[3px] pb-[3px]">
          <SmallButton name="palette" label="Standardfarben" />
          <SmallButton name="standard" label="Als Standard speichern" />
        </div>
      </div>
    </div>
  );
}

function Dialog() {
  return (
    <div
      role="dialog"
      aria-label="Anzeigeeigenschaften"
      className="absolute top-[18px] left-[593px] flex h-[646px] w-[850px] flex-col border border-[#686868] bg-[#f0f0f0] text-[11px] shadow-[0_4px_16px_rgba(0,0,0,0.35)]"
    >
      <div className="flex h-[30px] shrink-0 items-center bg-white pr-2.5 pl-2 text-xs">
        <h2 className="flex-1">Anzeigeeigenschaften - Standardkonfiguration mit weißem Hintergrund</h2>
        <button aria-label="Schließen">
          <svg viewBox="0 0 11 11" className="size-[11px]" stroke="#111">
            <path d="M.5.5l10 10M10.500.5l-10 10" />
          </svg>
        </button>
      </div>
      <div className="flex min-h-0 flex-1 gap-[7px] px-2 pt-2 pb-2">
        <CategoryTree />
        <div className="flex min-w-0 flex-1 flex-col">
          <div className="relative z-10 -mb-px flex items-end" role="tablist">
            <button role="tab" aria-selected="true" className="h-[21px] w-[63px] border border-b-0 border-[#dadada] bg-white">
              Bildschirm
            </button>
            <button role="tab" aria-selected="false" className="h-[19px] w-[93px] border border-l-0 border-[#dadada] bg-[#f0f0f0] pt-px">
              Ausdruckprotokoll
            </button>
          </div>
          <PropertyPanel />
          <div className="mt-2.5 flex gap-2">
            <section className="w-[315px]">
              <GroupHeader>Identische Einstellung</GroupHeader>
              <label className="flex h-[30px] items-center gap-[3px] border-r border-b border-[#a8a8e8] bg-[#f7f7f7] pl-[3px]">
                <input type="checkbox" className="size-[13px] appearance-none border border-[#333] bg-white" />
                Für Bildschirm und Ausdruckprotokoll
              </label>
            </section>
            <div className="flex-1 border-r border-b border-[#a8a8e8] bg-[#f7f7f7]" />
          </div>
        </div>
      </div>
      <div className="mx-2 flex h-[42px] shrink-0 items-start gap-[9px] border-t border-[#9a9a9a] px-px pt-[11px]">
        <SmallButton name="help" label="Hilfe" />
        <SmallButton name="edit" label="Bearbeiten" dark />
        <SmallButton name="decimals" label="Einheiten" />
        <SmallButton name="standard" label="Standard" />
        <button className="ml-auto h-[21px] w-[73px] border-2 border-[#0078d7] bg-[#e1e1e1]">OK</button>
        <button className="h-[21px] w-[73px] border border-[#adadad] bg-[#e1e1e1] pt-px">Abbrechen</button>
      </div>
      <svg viewBox="0 0 11 11" className="absolute right-0 bottom-0 size-[11px]" stroke="#8a8a8a">
        <path d="M0 11L11 0M4 11l7-7M8 11l3-3" />
      </svg>
    </div>
  );
}

export default function App() {
  return (
    <div className="flex h-screen flex-col overflow-hidden bg-[#cfd3dc] font-['Roboto','Open_Sans',sans-serif] text-xs text-black">
      <header className="flex h-[23px] shrink-0 items-center gap-1 bg-white pl-[3px] text-[#8e8e8e]">
        <svg viewBox="0 0 16 16" className="size-4" aria-hidden="true">
          <path d="M0 3l10-3 6 1v3l-5 3H0z" fill="#8c9298" />
          <path d="M0 3.500l11 1 5-3" fill="none" stroke="#c4c8cc" />
          <path d="M1 6.500h6M3.500 6v8" stroke="#3c5c90" strokeWidth="2" />
          <path d="M12 6v9" stroke="#8c9298" strokeWidth="6" />
          <circle cx="11.500" cy="9.500" r="1.800" fill="none" stroke="#c8a01c" strokeWidth="1.500" />
          <circle cx="11.500" cy="13.500" r="1.800" fill="none" stroke="#c8a01c" strokeWidth="1.500" />
        </svg>
        <h1>DUENQ 8.21.01 x64 - [004220-model-file*]</h1>
      </header>
      <nav className="flex h-6 shrink-0 items-center pl-1 text-[#3c4250]">
        <div className="mr-1 h-3.5 border-l-2 border-dotted border-[#a4a8b4]" />
        <svg viewBox="0 0 16 12" className="mr-0.5 h-3 w-4" aria-hidden="true">
          <path d="M0 0h16v12H0z" fill="#1c2c6c" />
          <path d="M0 8.500h16M6.500 1v11M11.500 2v10" fill="none" stroke="#fff" strokeWidth="1.200" />
          <path d="M1 8l5.500-6.500L11 8M11.500 2.500L16 7" fill="none" stroke="#fff" strokeWidth=".9" />
        </svg>
        {menus.map(([before, key, after]) => (
          <button key={before + key + after} className="px-[7px]">
            {before}
            <u className="underline-offset-2">{key}</u>
            {after}
          </button>
        ))}
      </nav>
      <Toolbars />
      <div className="flex min-h-0 flex-1">
        <Navigator />
        <main className="relative ml-[5px] min-w-0 flex-1 overflow-hidden border-t-2 border-l border-[#6a6a70] bg-white">
          <Drawing />
          <Dialog />
          <Arrows />
        </main>
      </div>
    </div>
  );
}
